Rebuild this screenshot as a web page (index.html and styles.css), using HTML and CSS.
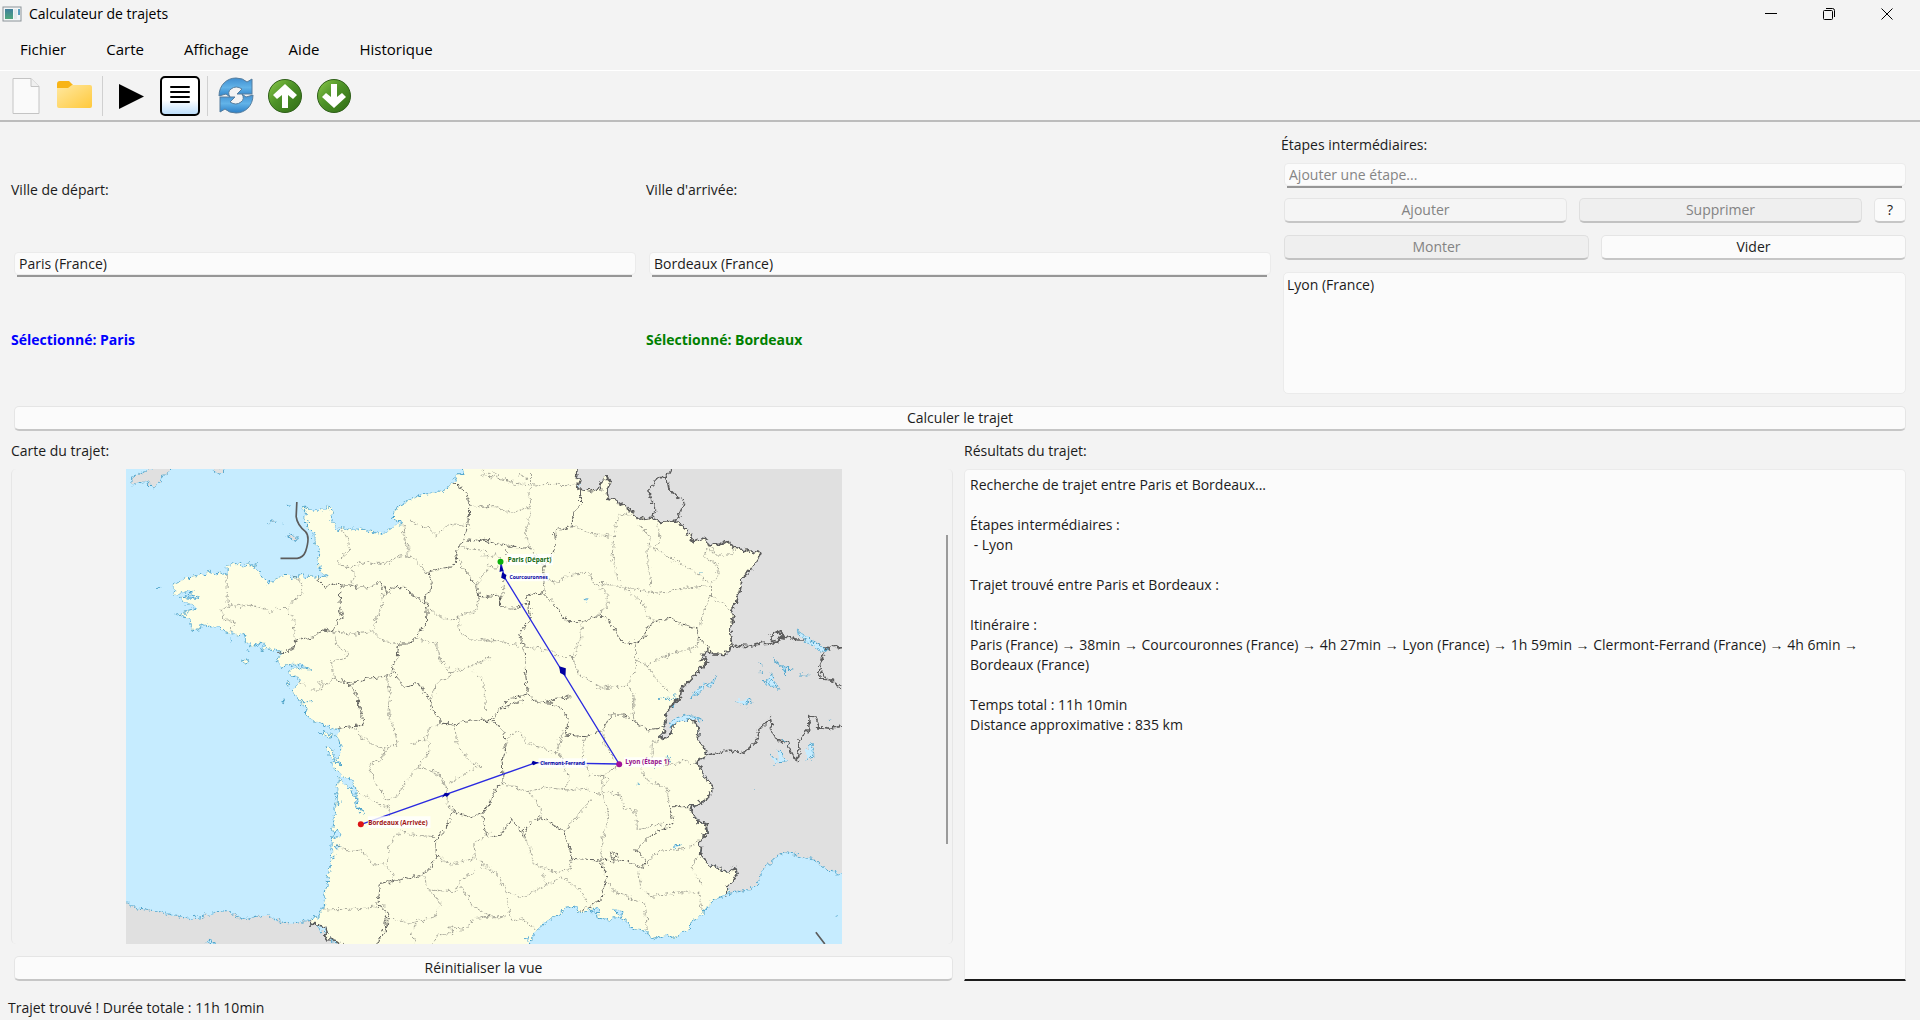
FILE: index.html
```html
<!DOCTYPE html>
<html lang="fr">
<head>
<meta charset="utf-8">
<title>Calculateur de trajets</title>
<link rel="stylesheet" href="styles.css">
</head>
<body>
<header class="titlebar">
  <svg class="app-icon" viewBox="0 0 20 16" aria-hidden="true">
    <defs><linearGradient id="app" x1="0" y1="0" x2="0" y2="1"><stop offset="0" stop-color="#3f7f9c"/><stop offset="1" stop-color="#4fa67c"/></linearGradient></defs>
    <rect x="1" y="1" width="18" height="14" fill="#f4f6f7" stroke="#8c9499"/>
    <rect x="3" y="3" width="8" height="10" fill="url(#app)"/>
    <rect x="12" y="3" width="3" height="10" fill="#e3e9ec"/><rect x="16" y="3" width="2" height="6" fill="#5b9fc0"/>
  </svg>
  <h1 class="title">Calculateur de trajets</h1>
  <div class="window-controls">
    <button class="win" aria-label="Réduire"><svg viewBox="0 0 14 14"><path d="M1 6.500H13"/></svg></button>
    <button class="win" aria-label="Restaurer"><svg viewBox="0 0 14 14"><path d="M2.500 3.500h7a1 1 0 0 1 1 1v7a1 1 0 0 1-1 1h-7a1 1 0 0 1-1-1v-7a1 1 0 0 1 1-1zM4 1.500h6.500a2 2 0 0 1 2 2V10"/></svg></button>
    <button class="win" aria-label="Fermer"><svg viewBox="0 0 14 14"><path d="M1.500 1.500l11 11M12.500 1.500l-11 11"/></svg></button>
  </div>
</header>
<nav class="menubar">
  <button class="menu">Fichier</button>
  <button class="menu">Carte</button>
  <button class="menu">Affichage</button>
  <button class="menu">Aide</button>
  <button class="menu">Historique</button>
</nav>
<div class="toolbar" role="toolbar">
  <button class="tool" aria-label="Nouveau"><svg viewBox="0 0 40 40"><path d="M7 2.500h18l8 8v27H7z" fill="#fafafa" stroke="#c4c4c4"/><path d="M25 2.500v8h8" fill="#f0f0f0" stroke="#c4c4c4"/></svg></button>
  <button class="tool wide" aria-label="Ouvrir"><svg viewBox="0 0 40 40"><defs><linearGradient id="fold" x1="0" y1="0" x2="1" y2="1"><stop offset="0" stop-color="#ffe8a0"/><stop offset="1" stop-color="#ffc93c"/></linearGradient></defs><path d="M2 8q0-3 3-3h9l4 4h15v8H2z" fill="#f8b416"/><path d="M2 12h11l4-3h18q2 0 2 2v19q0 2-2 2H4q-2 0-2-2z" fill="url(#fold)"/></svg></button>
  <span class="separator"></span>
  <button class="tool wide" aria-label="Calculer"><svg viewBox="0 0 40 40"><path d="M8 8l25 12.500L8 33z" fill="#000"/></svg></button>
  <button class="tool wide" aria-label="Historique"><svg viewBox="0 0 40 40"><defs><linearGradient id="list" x1="0" y1="0" x2="0" y2="1"><stop offset=".6" stop-color="#fff"/><stop offset="1" stop-color="#b9dcfa"/></linearGradient></defs><rect x="1" y="1" width="38" height="38" rx="4" fill="url(#list)" stroke="#000" stroke-width="2"/><path d="M11 11h18M11 16h18M11 21h18M11 26h18" stroke="#000" stroke-width="2" stroke-linecap="round"/></svg></button>
  <span class="separator"></span>
  <button class="tool wide" aria-label="Actualiser"><svg viewBox="0 0 40 40"><defs><linearGradient id="sync" x1="0" y1="0" x2="0" y2="1"><stop offset="0" stop-color="#3f8ed0"/><stop offset=".5" stop-color="#62b3e8"/><stop offset="1" stop-color="#2c7fc6"/></linearGradient></defs><g fill="url(#sync)" stroke="#567d9d" stroke-width="1"><path d="M3 20C3 9 11 2 20 2q7 0 11 4l5-3v15H21l5-5q-6-4-11 0-4 3-1 8l-4-3z"/><path d="M37 19c0 11-8 18-17 18q-7 0-11-4l-5 3V21h15l-5 5q6 4 11 0 4-3 1-8l4 3z"/></g></svg></button>
  <button class="tool wide" aria-label="Monter"><svg viewBox="0 0 40 40"><defs><linearGradient id="grn" x1="0" y1="0" x2="1" y2="1"><stop offset="0" stop-color="#8dcb4b"/><stop offset=".45" stop-color="#4d9228"/><stop offset="1" stop-color="#2f6b14"/></linearGradient></defs><circle cx="20" cy="20" r="16.500" fill="url(#grn)" stroke="#2f5f1a"/><path d="M20 8L32 19l-4 4-5-4v13h-6V19l-5 4-4-4z" fill="#fff"/></svg></button>
  <button class="tool wide" aria-label="Descendre"><svg viewBox="0 0 40 40"><circle cx="20" cy="20" r="16.500" fill="url(#grn)" stroke="#2f5f1a"/><path d="M20 32L8 21l4-4 5 4V8h6v13l5-4 4 4z" fill="#fff"/></svg></button>
</div>
<main class="content">
  <section class="inputs">
    <div class="city">
      <label for="depart">Ville de départ:</label>
      <span class="field"><input id="depart" type="text" value="Paris (France)"></span>
      <output class="selected start">Sélectionné: Paris</output>
    </div>
    <div class="city">
      <label for="arrivee">Ville d'arrivée:</label>
      <span class="field"><input id="arrivee" type="text" value="Bordeaux (France)"></span>
      <output class="selected end">Sélectionné: Bordeaux</output>
    </div>
    <div class="steps">
      <label for="etape">Étapes intermédiaires:</label>
      <span class="field"><input id="etape" type="text" placeholder="Ajouter une étape..."></span>
      <div class="row">
        <button class="btn" disabled>Ajouter</button>
        <button class="btn sunk" disabled>Supprimer</button>
        <button class="btn help">?</button>
      </div>
      <div class="row">
        <button class="btn sunk" disabled>Monter</button>
        <button class="btn">Vider</button>
      </div>
      <ul class="list"><li>Lyon (France)</li></ul>
    </div>
  </section>
  <button class="btn calc">Calculer le trajet</button>
  <section class="output">
    <div class="pane">
      <h2 class="label">Carte du trajet:</h2>
      <div class="mapview">
        <svg class="map" viewBox="0 0 2145 1425" role="img" aria-label="Carte de France">
          <defs>
            <filter id="rough" filterUnits="userSpaceOnUse" x="0" y="0" width="2145" height="1425"><feTurbulence type="fractalNoise" baseFrequency="0.07" numOctaves="3" seed="4"/><feDisplacementMap in="SourceGraphic" scale="22" xChannelSelector="R" yChannelSelector="G"/></filter>
          </defs>
          <rect class="sea" width="2145" height="1425"/>
          <g filter="url(#rough)">
            <rect class="sea" x="-40" y="-40" width="2225" height="1505"/>
            <!-- neighbouring countries -->
            <path class="abroad" d="M1340-40H2185V1223L2102 1203 2062 1173 2022 1161 1977 1148 1947 1163 1932 1183 1907 1203 1892 1248 1862 1263 1810 1273 1500 1200V700z"/>
            <g transform="translate(-18 -27)">
              <path class="abroad coast" d="M30 70L35 50 90 27 95 10H160L158 27 125 50 115 70 100 85 80 62 45 72zM280 20L285 36 300 40 312 30V20zM447 188l10-9 10 3-4 8zM503 235l2-9 26 3 2 8-15 4z"/>
              <path class="france coast" d="M1020 -10L1028 40 1010 42 1003 62 998 68 975 88 945 97 900 105 865 120 832 138 818 172 832 184 850 190 832 193 810 210 776 222 735 208 690 207 660 203 650 210 640 190 628 178 637 160 636 145 620 140 605 150 580 150 562 143 543 138 545 146 556 150 553 170 560 190 563 205 577 218 580 240 590 265 600 272 590 295 596 320 605 337 620 347 598 350 555 352 550 340 540 350 515 355 495 342 475 352 460 362 442 372 430 355 415 335 400 325 405 310 390 318 385 305 370 318 360 310 330 312 320 322 320 345 295 338 285 345 265 332 250 345 215 348 180 362 158 370 160 404 190 397 218 393 205 402 238 415 180 412 195 432 220 432 222 448 168 463 195 470 210 482 215 512 235 510 245 492 270 505 290 500 310 515 330 518 350 525 372 520 375 545 400 560 410 550 435 550 420 572 440 566 470 572 490 575 465 598 490 620 520 612 545 615 570 628 540 622 512 625 505 642 530 650 537 665 525 680 517 695 535 720 550 740H1100V-10z"/>
              <path class="france coast" d="M363 600l12-4 12 12-13 4zM484 725l8-2 5 5zM497 667l8-3 6 12-7 2z"/>
              <path class="coast" d="M110 382l12 0M330 540l8 6M378 568l5 8M465 605l8 8M484 190l5 2M505 137l8-3"/>
              <path class="coast lake" d="M190 408l30-2 10 5-25 3zM372 525l8 5-4 3zM400 555l30-5 5 8-15 5z"/>
            </g>
            <path class="france border" transform="translate(1062 -27)" d="M0 -15V745H555L600 715 603 685 625 665 650 635 683 602 660 598 672 575 680 570 700 582 735 583 745 570 755 555 748 520 752 490 760 470 750 450 765 430 780 390 785 350 805 335 820 315 840 283 800 270 760 265 745 248 730 245 720 253 685 253 670 235 640 245 615 205 585 183 540 187 510 172 470 178 450 150 415 125 385 118 380 95 388 60 375 50 362 70 360 85 330 93 290 85 298 65 288 50 293 -15z"/>
            <g transform="translate(-18 693)">
              <path class="abroad coast" d="M-30 600L25 607 30 620 75 628 110 633 150 645 200 655 245 650 285 635 320 632 345 648 388 662 400 650 440 645 490 670 520 672 565 658 700 780H-30z"/>
              <path class="france coast" d="M540 5L558 28 558 45 585 65 610 75 650 88 655 90 645 110 655 122 662 140 655 165 645 180 665 198 645 185 637 188 640 205 665 225 690 240 705 265 710 300 715 330 735 340 725 335 707 320 705 290 690 265 665 245 655 232 650 260 648 300 642 340 637 390 634 450 630 490 618 560 607 625 590 650 565 658 570 672 590 675 615 680 620 695 610 710 620 722 630 712 645 722 668 765H1100V5z"/>
              <path class="border" d="M565 658L570 672 590 675 615 680 620 695 610 710 620 722 630 712 645 722 668 740"/>
              <path class="coast france" d="M597 98l20 0 22 10-14 4zM617 140l15 5 14 28-8 8-18-25zM484 5l8 0 4 3z"/>
              <path class="coast lake" d="M638 400l12-10 5 10 10 5-12 6-15 0zM644 440l12-6-5 12zM640 465l8 3-4 7zM652 300l5 8-3 10zM255 730l6-6 20 1v6z"/>
            </g>
            <g transform="translate(1062 693)">
              <path class="france coast" d="M0-5V765H148L150 732 158 705 175 685 205 660 230 645 255 625 285 618 290 635 310 640 325 625 345 625 350 655 385 660 400 650 445 665 450 685 495 690 500 705 520 715 555 708 590 712 605 695 630 690 630 665 660 650 670 630 695 605 735 585 748 580 742 560 755 545 770 522 765 502 750 512 735 513 700 500 680 488 660 465 663 440 655 432 665 410 683 400 680 372 650 365 640 342 625 318 655 312 690 290 690 275 700 262 680 240 668 220 660 205 648 195 655 180 680 165 668 140 650 115 653 95 647 70 635 60 600 60 575 80 570 105 550 115 535 110 555 95 550 75 558 50 560 35 575 15 590-5z"/>
              <path class="border" d="M735 590L742 560 755 545 770 522 765 502 750 512 735 513 700 500 680 488 660 465 663 440 655 432 665 410 683 400 680 372 650 365 640 342 625 318 655 312 690 290 690 275 700 262 680 240 668 220 660 205 648 195 655 180 680 165 668 140 650 115 653 95 647 70 635 60 600 60 575 80 570 105 550 115 535 110 555 95 550 75 558 50 560 35 575 15 590-5"/>
              <path class="border" d="M680 165L750 150 790 160 825 125 835 90 870 55 875 95 890 118 920 130 945 180 955 170 955 120 985 90 985 50 1005 48 1015 80 1050 85 1100 75"/>
              <path class="coast" d="M748 580L800 570 830 555 845 510 870 490 885 470 915 455 960 468 1000 480 1040 510 1100 530"/>
              <path class="coast lake" d="M565 75Q590 45 625 45L665 62 635 58Q600 58 572 80zM335 630l12-5 8 10-14 8zM400 628l32 8-10 18zM575 440l28-8-22 12zM868 158l22 25-5 12M905 118l15 15M890 150l30 30-25 8M975 180l25-10-5-40-15 20M558 165l12 20M765 5l25 12 25-12M1045 60l10-5M815 258l5 4M1065 648h5M137 715l10 5-5 5M522 200v10M510 230h3M472 253h6"/>
            </g>
            <path class="patch" d="M1050-40H1100V1465H1050zM560 682H1100V728H560zM1055 660H1600V728H1055z"/>
            <!-- administrative limits, north-west -->
            <g transform="translate(-18 -27)">
              <path class="region" d="M998 68L1040 100 1045 135 1042 200 1030 240 1005 270 1010 290 998 320 960 325 918 338 935 370 930 395 912 410 920 445 918 490 885 535 865 552 835 552 830 590 815 630 850 680 895 670 930 722M1040 240L1070 243 1095 238 1110 244M1010 290L1025 320 1050 350 1070 385 1075 410 1110 412M920 440L870 400 850 380 825 380 800 400 780 365 745 380 700 382 692 375 660 375 640 370 615 382 597 365 595 350M662 375L658 440 667 470 650 485 638 515 605 510 580 530 525 540 520 568 473 578M635 655L690 672 740 655 800 648 815 635M688 672L710 710 722 750"/>
              <path class="dept" d="M1045 135L1085 142 1110 138M1085 27L1095 40H1110M655 203L680 232 688 270 655 300 660 318 692 325 705 345 690 375M692 322L720 310 800 310 830 290 860 285 890 300 918 338M848 190L850 230 862 255 862 290M870 183L900 195 930 210 945 225 990 190 1040 198M320 345L320 430 350 440 390 435 440 450 445 462 465 447 500 445 525 415 545 400 540 365 520 350M330 435L303 450 310 475 345 490 330 515M500 445L520 480 525 540M790 400L782 450 765 480 755 515 700 523 640 515M755 515L780 540 835 552M640 515L650 560 680 575 675 595 630 605 645 655M535 665L570 690 600 690 597 665 608 665 605 685 640 655M925 445L970 475 1000 480 1020 465 1065 455 1075 410M1015 470L1015 510 1050 540 1110 540M885 535L945 550 960 600 990 635 985 655 950 665 940 700 930 720 930 750M990 635L1050 620 1110 590M1055 630L1090 665 1095 750M800 650L808 700 803 750M1070 380L1085 345 1110 320M1010 262L1060 268 1100 272"/>
            </g>
            <!-- north-east -->
            <g transform="translate(1062 -27)">
              <path class="region" d="M0 238L75 258 150 262M300 88L300 130 277 160 275 200 222 215 225 250 210 290 190 320 190 400 215 425 260 485 305 485 345 468 375 470 405 510 420 540 455 552 495 530 500 505 530 480 570 475 600 490 650 505 655 530 690 570M0 410L60 405 60 440 100 445 145 430 135 405 190 398M145 430L150 480 115 520 130 560 140 700 170 725 210 730 225 715 275 710M60 745L90 715 140 705"/>
              <path class="dept" d="M150 262L135 220 150 160 145 100 155 75M0 140L50 140 90 160 150 140M0 45L60 55 100 70 155 75 220 73 300 75M150 27L150 75M277 198L330 220 400 230 395 290 410 350 425 380 500 395M400 230L415 165 465 160M470 190L510 230 500 290 512 380M530 190L540 240 520 265 580 300 640 335 690 370 690 410 665 465 660 500M690 405L750 450M500 395L540 400 620 385 690 375M685 253L670 290 715 315 710 355 690 370M685 253L700 285 755 285 760 265M190 350L230 368 265 345 330 335 335 365 380 400 380 440 345 470M360 370L425 380 490 430 500 470 530 480M305 485L300 540 275 590 295 640 360 685 440 675 465 630 465 550M465 600L500 615 560 585 650 560 655 510M130 560L200 570 240 590 285 590M500 615L530 660 570 700M440 675L460 700 460 750M0 535L60 545 120 560M75 258L75 310M70 360L60 440M150 262L190 320M20 295L45 285 60 295M20 310L40 325 60 320M0 290L25 285M40 30L60 60 90 65 120 45 145 60"/>
              <path class="border" d="M580 10L560 50 535 50 505 90 510 120 525 150 518 172M558 50L565 85 590 112 610 122 600 155 587 183M755 555L800 560 850 550 885 548 870 530 890 513 910 525 880 550 900 540 915 528 945 540 980 540 1040 570 1060 555 1100 572M1035 570L1015 620V655L1050 660 1100 695M1020 620L1032 655"/>
              <path class="coast lake" d="M950 510l25 20 65 42-20 2-40-28-30-25zM630 712l15-20 35-25-20 30zM683 680l25-33-15 35zM880 598l25 25 33 4-30 3zM850 665l20-10 25 30-20-8zM765 722l15 12 35-18M840 640l8-8M960 645h25M838 605l5 12M310 420l10-5-5 10M655 335l8 2M872 635l8 20-18 15M575 740l10-8M918 635v16M583 703v8"/>
            </g>
            <!-- south-west -->
            <g transform="translate(-18 693)">
              <path class="region" d="M650 85L700 80 730 75 720 30 712 0M930 0L940 35 965 70 1000 72 1050 60 1110 62M1000 335L1050 352 1095 335 1110 300M1000 335L975 385 945 420 948 465 925 510 900 527 780 550 772 615 805 640 800 680 770 732M795 650L798 685 790 670z"/>
              <path class="dept" d="M705 85L720 110 790 150 830 130 820 80 805 50 805 0M790 150L785 180 745 195 760 240 800 300 830 290 870 225 895 200 930 145 915 120 870 130M915 120L925 85 965 70M1000 72L1010 130 1045 185 1085 200 1050 210 985 250M895 200L960 225 980 270 980 310 1000 335M710 278L750 295 790 320 810 320 808 345M650 435L690 455 720 450 760 495 800 490 810 430 840 390 870 405 945 410M790 495L820 520 815 550M607 630L680 628 730 625 795 618M910 530L925 570 960 610 945 650 870 670 805 655M945 465L990 495 1060 475 1110 505M925 570L1000 575 1020 545 1065 510M1020 560L1060 620 1110 650M890 670L870 700 885 732M940 732L950 705 1000 700 985 680 1020 690 1040 680 1065 655 1110 650M1110 400L1060 430 1065 475"/>
            </g>
            <!-- south-east -->
            <g transform="translate(1062 693)">
              <path class="region" d="M0 60L35 60 70 95 75 150 65 180 68 250 45 265 30 310 5 340 20 415 60 405 95 355 130 405 150 365 185 350 210 372 250 390 275 475 320 478 360 480 380 535 360 600 300 635M35 60L60 25 130 0M195 0L240 25 265 60 255 105 315 110 370 85 390 45 430 45 500 90 535 85 555 70M360 480L440 485 490 505 495 475 465 450 500 415 580 365 570 320 625 320M390 460L412 458 408 475 395 478z"/>
              <path class="dept" d="M70 150L90 105 115 95 140 130 230 160 245 95M235 160L265 230 255 270M70 250L145 275 190 262 255 270 320 265 360 285 370 230 330 225 305 180 310 120 320 110M370 85V130L405 180M145 275L175 310 185 350M255 390L335 295M370 280L385 350 365 420 360 480M370 275L420 285 430 325 470 335 470 390 550 370M360 230L410 200M360 225L385 235 370 260M480 200L500 245 560 260 565 310M515 130L515 180 560 200 610 180 650 195M535 120L515 130M130 405L150 450 160 490 215 515 265 510 275 475M0 500L50 520 80 580 130 590 200 555 185 520M200 555L240 530 300 570 320 610M380 540L400 575 495 610 500 690M475 515L480 560 510 590 600 575 655 580 665 630M490 500L530 455 620 445 675 405M650 470L635 510 665 555M80 595L90 660 120 655 165 690M0 650L75 650M455 0L460 60 500 90"/>
            </g>
          </g>
          <path class="limit" d="M511 99L509 143Q512 168 537 188 552 203 537 248 530 266 512 268H462M2068 1390L2095 1425"/>
          <!-- route -->
          <path class="route" d="M1122 278L1134 325 1478 885M1478 885L1228 881 704 1066"/>
          <path class="arrow" d="M1122 285l-3 24 12-4zM1127 310l-3 16 12 6 4-14zM1298 592l20 6-1 22-16-8zM1219 875l16 6-14 8-6-6zM955 971l16 3-10 10-5-4-10 6z"/>
          <circle cx="1122" cy="278" r="9" fill="#0ab00a"/>
          <circle cx="1478" cy="886" r="9" fill="#a0109a"/>
          <circle cx="703" cy="1066" r="9" fill="#dc1414"/>
          <path class="tag" d="M1140 255h140v34h-140zM1143 312h124v25h-124zM1236 868h145v28h-145zM1492 865h122v30h-122zM724 1042h188v35H724z"/>
          <text class="place big" x="1144" y="279" fill="#0a640a">Paris (Départ)</text>
          <text class="place" x="1149" y="330" fill="#0000a0">Courcouronnes</text>
          <text class="place" x="1241" y="888" fill="#0000a0">Clermont-Ferrand</text>
          <text class="place big" x="1496" y="885" fill="#96108c">Lyon (Étape 1)</text>
          <text class="place big" x="725" y="1068" fill="#a01414">Bordeaux (Arrivée)</text>
        </svg>
        <span class="scroll"></span>
      </div>
      <button class="btn reset">Réinitialiser la vue</button>
    </div>
    <div class="pane">
      <label class="label" for="resultats">Résultats du trajet:</label>
      <textarea id="resultats" class="results" readonly>Recherche de trajet entre Paris et Bordeaux...

Étapes intermédiaires :
 - Lyon

Trajet trouvé entre Paris et Bordeaux :

Itinéraire :
Paris (France) → 38min → Courcouronnes (France) → 4h 27min → Lyon (France) → 1h 59min → Clermont-Ferrand (France) → 4h 6min → Bordeaux (France)

Temps total : 11h 10min
Distance approximative : 835 km</textarea>
    </div>
  </section>
</main>
<footer class="status">Trajet trouvé ! Durée totale : 11h 10min</footer>
</body>
</html>
```
FILE: styles.css
```css
* { box-sizing: border-box; }

body {
  margin: 0;
  height: 100vh;
  min-height: 760px;
  display: flex;
  flex-direction: column;
  background: #f3f3f3;
  color: #1b1b1b;
  font: 14px/20px "Open Sans", "Noto Sans", sans-serif;
}

button, input, textarea {
  margin: 0;
  font: inherit;
  color: inherit;
}

.titlebar {
  display: flex;
  align-items: center;
  height: 28px;
  padding: 0 4px 0 2px;
  color: #000;
}
.app-icon { width: 20px; height: 16px; }
.title {
  flex: 1;
  margin: 0 0 0 7px;
  font-size: 14px;
  font-weight: 400;
}
.window-controls { display: flex; }
.win {
  width: 58px;
  height: 28px;
  padding: 0;
  border: 0;
  background: none;
}
.win svg {
  display: block;
  width: 14px;
  height: 14px;
  margin: auto;
  fill: none;
  stroke: #000;
}

.menubar {
  display: flex;
  height: 43px;
  border-bottom: 1px solid #fff;
}
.menu {
  padding: 0 20px;
  border: 0;
  background: none;
  color: #000;
  font-size: 15px;
}

.toolbar {
  display: flex;
  align-items: center;
  height: 51px;
  padding: 0 5px;
  border-bottom: 2px solid #bcbcbc;
}
.tool {
  width: 45px;
  height: 40px;
  padding: 0 3px 0 0;
  border: 0;
  background: none;
}
.tool.wide { width: 49px; padding: 0; }
.tool svg { display: block; width: 40px; height: 40px; margin: auto; }
.separator { width: 1px; height: 40px; margin: 0 3px; background: #d0d0d0; }

.content {
  flex: 1;
  min-height: 0;
  display: flex;
  flex-direction: column;
  padding: 10px 14px 0 11px;
}

.inputs {
  display: grid;
  grid-template-columns: repeat(3, 1fr);
  gap: 10px;
}
.city {
  display: grid;
  grid-template-rows: repeat(3, 1fr);
  align-items: center;
  padding: 20px 0 16px;
}
.selected { font-weight: 700; }
.start { color: #00f; }
.end { color: #008000; }

.field {
  display: block;
  position: relative;
  padding: 0 0 2px 3px;
}
.field::after {
  content: "";
  position: absolute;
  left: 6px;
  right: 4px;
  bottom: 0;
  height: 2px;
  background: #969696;
}
.field input {
  display: block;
  width: 100%;
  height: 23px;
  padding: 0 4px;
  border: 1px solid #ebebeb;
  border-radius: 4px;
  background: #fbfbfb;
}
.field input::placeholder { color: #858585; opacity: 1; }

.steps { display: flex; flex-direction: column; padding-top: 3px; }
.steps .field { margin-top: 8px; }
.row { display: flex; gap: 12px; margin-top: 10px; padding-left: 3px; }
.row + .row { margin-top: 12px; }

.btn {
  flex: 1 1 0;
  height: 25px;
  padding: 0;
  border: 1px solid #e5e5e5;
  border-bottom: 2px solid #c6c6c6;
  border-radius: 5px;
  background: #fbfbfb;
  line-height: 20px;
}
.btn:disabled { background: #f5f5f5; color: #838383; }
.btn.sunk { background: #efefef; border-color: #dfdfdf #dfdfdf #c2c2c2; }
.btn.help { flex: none; width: 32px; }
.list {
  height: 122px;
  margin: 12px 0 0 2px;
  padding: 2px 3px;
  border: 1px solid #ebebeb;
  border-radius: 5px;
  background: #fbfbfb;
  list-style: none;
}
.calc { flex: none; margin: 12px 0 0 3px; }

.output {
  flex: 1;
  min-height: 0;
  display: grid;
  grid-template-columns: 1fr 1fr;
  grid-template-rows: minmax(0, 1fr);
  gap: 11px;
  padding-top: 10px;
}
.pane { display: flex; flex-direction: column; min-height: 0; }
.label { margin: 0 0 8px; font-size: 14px; font-weight: 400; }
.mapview {
  flex: 1;
  min-height: 0;
  display: flex;
  padding: 0 4px 0 8px;
  border: solid #e6e6e6;
  border-width: 0 1px;
  border-radius: 5px;
}
.map { flex: 1; min-width: 0; height: 100%; }
.scroll {
  align-self: center;
  width: 2px;
  height: 65%;
  margin-bottom: 34px;
  margin-left: -2px;
  background: #9a9a9a;
}
.reset { flex: none; margin: 12px 0 0 3px; }
.results {
  flex: 1;
  width: 100%;
  padding: 5px;
  border: 1px solid #ebebeb;
  border-bottom: 2px solid #1b1b1b;
  border-radius: 5px 5px 0 0;
  background: #fbfbfb;
  resize: none;
  outline: 0;
}

.status { padding: 17px 8px 2px; }

.sea { fill: #c6ecff; }
.abroad { fill: #e0e0e0; }
.france { fill: #fefee4; }
.patch { fill: #fefee4; }
.coast { stroke: #4ca3cb; stroke-width: 3; stroke-dasharray: 9 3; }
.coast:not(.france):not(.abroad) { fill: none; }
.coast.lake:not(.france) { fill: #c6ecff; }
.border { stroke: #5c5c5c; stroke-width: 5; }
.border:not(.france), .region, .dept, .limit, .route { fill: none; }
.region { stroke: #62625e; stroke-width: 3; stroke-dasharray: 14 2; }
.dept { stroke: #757570; stroke-width: 2; stroke-dasharray: 9 3; }
.limit { stroke: #5c5c5c; stroke-width: 5; }
.route { stroke: #2a2ae0; stroke-width: 4; }
.arrow { fill: #0000a0; }
.tag { fill: #fff; fill-opacity: .8; }
.place { font: 700 15px "Open Sans", sans-serif; }
.place.big { font-size: 19px; }
```
